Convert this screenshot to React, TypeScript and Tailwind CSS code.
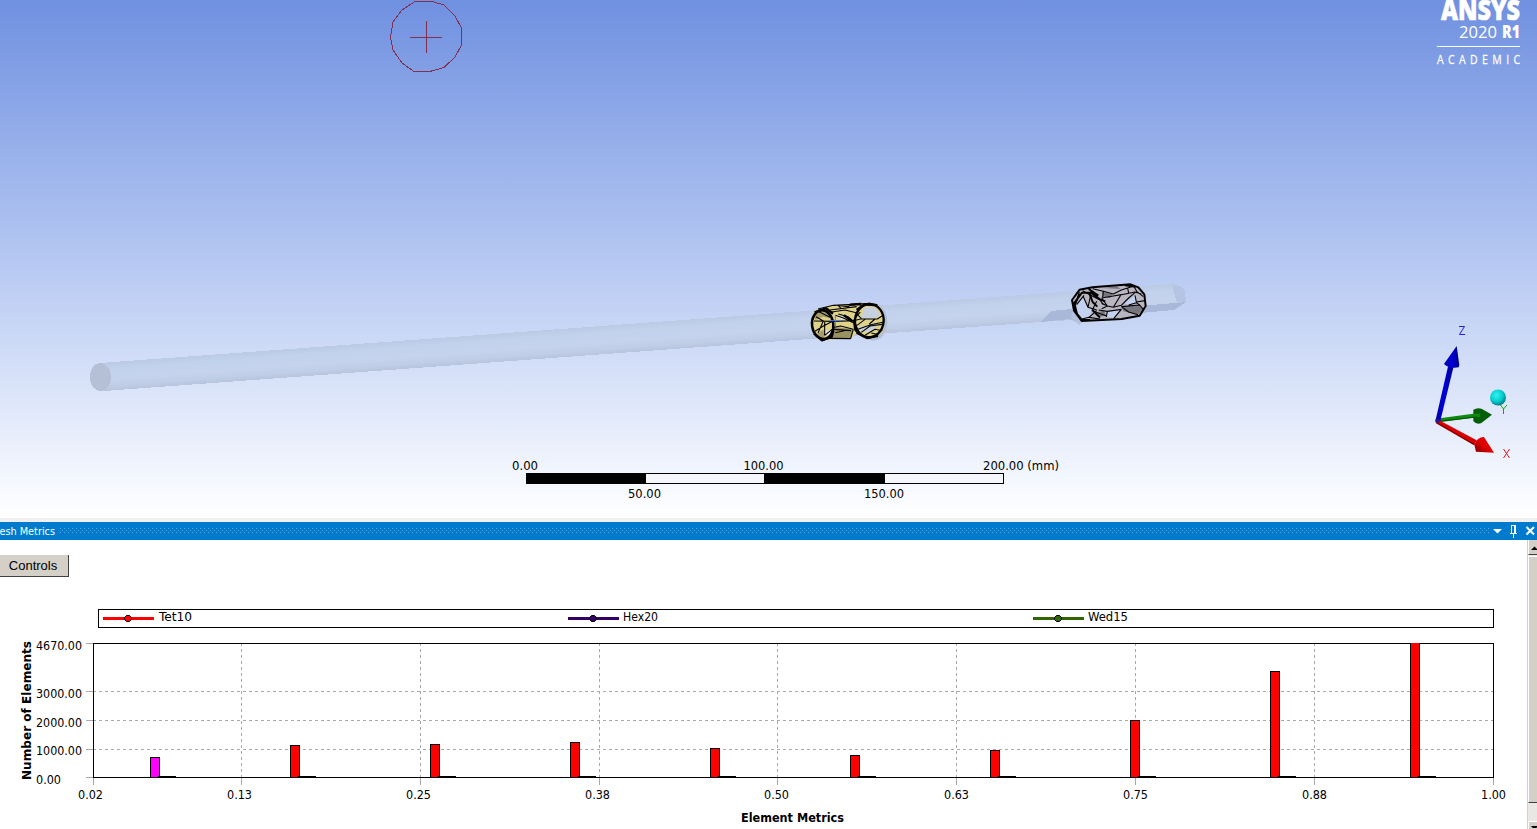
import React from 'react';

const tahoma = "'DejaVu Sans Condensed','DejaVu Sans',sans-serif";

type LabelProps = {
  x: number;
  y: number;
  w: number;
  children: string;
  size?: number;
  fill?: string;
  weight?: number;
  family?: string;
};

function Label({ x, y, w, children, size = 12, fill = '#000', weight = 400, family = tahoma }: LabelProps) {
  return (
    <text x={x} y={y} fontSize={size} fill={fill} fontWeight={weight} fontFamily={family} textLength={w} lengthAdjust="spacingAndGlyphs">
      {children}
    </text>
  );
}

function Pipe() {
  return (
    <g shapeRendering="crispEdges">
      <defs>
        <linearGradient id="pipe" x1="600" y1="326" x2="602.06" y2="354" gradientUnits="userSpaceOnUse">
          <stop offset="0" stopColor="#bac9e4" />
          <stop offset="0.25" stopColor="#c2d1ec" />
          <stop offset="0.6" stopColor="#c6d3ed" />
          <stop offset="0.85" stopColor="#c0cde6" />
          <stop offset="1" stopColor="#b8c5dd" />
        </linearGradient>
      </defs>
      <path d="M100 363 L1172 284 Q1182 285 1185 292 L1186 303 L1174 310 L1082 317 L1078 323 L1072 320 L1040 322 L104 391 Q90 391 90 377 Q90 364 100 363Z" fill="url(#pipe)" />
      <path d="M1040 322 L1051 311 L1072 309 L1078 323 L1070 319Z" fill="#a9b8d8" />
      <path d="M1140 306 L1186 302 L1174 310 L1140 313Z" fill="#a9b8d8" />
      <path d="M1172 284 Q1182 285 1185 291 L1186 302 L1177 303 L1174 292Z" fill="#b4c4e2" />
      <ellipse cx="100.500" cy="377" rx="10.500" ry="14" fill="#b5c0d7" />
    </g>
  );
}

function BrassMesh() {
  return (
    <g transform="translate(790 290) scale(0.33333)" strokeLinejoin="bevel">
      <ellipse cx="250" cy="96" rx="42" ry="56" fill="#b4c0d6" />
      <path d="M84 56 L130 46 L205 42 L245 40 L272 52 L283 88 L279 126 L254 142 L196 132 L182 145 L96 151 L72 134 L64 100 L70 66Z" fill="#dfd28a" />
      <path d="M134 111 L190 118 L182 146 L118 147Z" fill="#99915e" />
      <path d="M74 76 L92 63 L116 70 L120 84 L98 80 L76 90Z M82 132 L100 118 L104 142 L98 148Z" fill="#a79d68" />
      <path d="M221 55 Q237 46 258 54 L270 74 L255 86 L215 86Z M204 110 L226 108 L266 101 L244 124 L214 126Z" fill="#c6d0de" />
      <path d="M104 122 L122 120 L124 134 L106 136Z M136 76 L160 80 L183 93 L150 88Z" fill="#dce2ec" />
      <g fill="none" stroke="#000" strokeWidth="3.300">
        <path d="M84 57 L130 46 L205 42 L242 40 M96 151 L120 145 L182 146 M190 118 L182 146 M120 60 L200 50 M125 66 L165 60 L205 70 M145 72 L174 80 L192 95 M136 76 L160 84 L190 98 M132 112 L152 108 L190 118 M132 118 L183 122 M136 128 L172 120 M72 93 L133 94 L190 92 M78 80 L100 93 L84 129 M75 124 L100 108 L128 94 M104 96 L104 136 L129 116 M84 64 L120 82 M154 56 L144 46 L175 50 L182 44 M211 66 L192 89 L205 126" />
        <path d="M190 92 L212 87 L262 87 L276 78 M201 106 L225 88 M204 118 L242 104 L282 96 M214 127 L240 108 L276 103 M225 136 L255 118 L277 122 M201 72 L214 86 M238 102 L255 87 M244 129 L266 134" />
      </g>
      <ellipse cx="98" cy="104" rx="32" ry="43" fill="none" stroke="#000" strokeWidth="7.500" transform="rotate(-7 98 104)" />
      <ellipse cx="238" cy="92" rx="43" ry="50" fill="none" stroke="#000" strokeWidth="7" transform="rotate(5 238 92)" />
      <path d="M74 67 L108 55 L129 71 M72 130 L96 151 L125 140 L130 122 M200 60 L224 43 L262 46 M200 128 L231 144 L264 137 M192 90 L196 119 L206 130 M180 44 L214 42 M162 76 L184 92" fill="none" stroke="#000" strokeWidth="7.500" />
      <path d="M120 92 H153 M136 77 V108" stroke="#4f7fe6" strokeWidth="3" />
    </g>
  );
}

function SteelMesh() {
  return (
    <g transform="translate(1020 270) scale(0.33333)" strokeLinejoin="bevel">
      <path d="M160 118 L152 142 L178 165 L190 151Z" fill="#b3c2de" />
      <path d="M178 60 L220 51 L332 43 L355 50 L374 71 L377 109 L359 137 L280 148 L184 153 L160 119 L156 90Z" fill="#b9b6c2" />
      <path d="M170 104 L190 80 L204 112 L216 122 L207 142 L186 147 L169 126Z M313 98 L345 76 L349 96 L326 105Z M262 124 L298 121 L281 145 L259 140Z" fill="#c2d2f0" />
      <path d="M304 110 L359 105 L368 118 L354 134 L310 124Z M228 127 L252 122 L258 137 L233 141Z M246 65 L277 73 L270 84 L250 80Z M249 54 L290 49 L302 57Z" fill="#77757d" />
      <g fill="none" stroke="#000" strokeWidth="3.300">
        <path d="M218 56 L250 64 L280 72 L304 60 L323 54 L341 48 M245 84 L280 78 L304 74 L345 66 L364 72 M245 84 L262 108 L280 112 L302 76 M250 64 L248 82 M323 54 L326 70 M341 48 L350 64 L370 80 M345 68 L326 84 L304 106 L280 112 M345 76 L349 96 L375 92 M326 105 L349 98 L359 105 L370 118 M304 110 L359 105 M304 110 L326 126 L354 134 M262 124 L304 118 L281 146 M236 120 L262 124 L259 141 M228 127 L258 137 M245 100 L262 108 L245 116" />
        <path d="M188 62 L212 76 L240 90 L250 104 M190 80 L204 112 L230 120 M212 76 L204 112 M170 104 L192 76 M164 122 L186 147 L207 142 L230 122 M178 66 L166 104 M230 94 L216 122 M207 142 L240 147" />
      </g>
      <path d="M178 59 L217 52 L332 43 L355 52 L373 73 L377 108 L359 137 L305 147 L185 153 L162 122 L156 90 L179 59 M162 100 L186 68 L212 68 L240 88 M171 132 L164 104 L179 72 M181 149 L210 150 M206 57 L235 77 M208 70 L218 96 L232 110 M217 120 L240 143 M315 46 L347 50 M240 88 L256 94" fill="none" stroke="#000" strokeWidth="6" />
    </g>
  );
}

function Triad() {
  return (
    <g>
      <defs>
        <radialGradient id="ball" cx="0.4" cy="0.35" r="0.65">
          <stop offset="0" stopColor="#38f2ee" />
          <stop offset="0.6" stopColor="#00cfd2" />
          <stop offset="1" stopColor="#007f88" />
        </radialGradient>
        <linearGradient id="zArrow"><stop stopColor="#0000a0" /><stop offset="0.5" stopColor="#0000dc" /><stop offset="1" stopColor="#000080" /></linearGradient>
        <linearGradient id="xArrow" x1="0" y1="1" x2="1" y2="0"><stop stopColor="#7d0000" /><stop offset="0.5" stopColor="#e60000" /><stop offset="1" stopColor="#c00000" /></linearGradient>
      </defs>
      <g transform="translate(1410 315) scale(0.33333)">
        <path d="M190 284 Q203 276 216 282 L246 299 L213 325 Q198 329 190 318Z" fill="#075e09" />
        <path d="M78 311 L190 296 L210 296 L211 305 L87 322Z" fill="#0b8a0d" />
        <path d="M78 320 L200 306" stroke="#045006" strokeWidth="3" />
        <path d="M76 319 L115 150 L131 154 L90 322Z" fill="url(#zArrow)" />
        <path d="M140 93 L102 147 Q115 161 146 157 L148 150Z" fill="url(#zArrow)" />
        <path d="M82 313 L200 376 L193 389 L78 323Z" fill="#d80000" />
        <path d="M79 323 L193 389" stroke="#890000" strokeWidth="4" />
        <path d="M222 366 Q201 366 193 389 L198 410 L252 413Z" fill="url(#xArrow)" />
        <path d="M76 313 H88 V323 H77Z" fill="#26188f" />
      </g>
      <g fill="none" strokeWidth="1">
        <path d="M1459 326.500 H1464.500 L1459.500 334.500 H1465" stroke="#2020e0" />
        <path d="M1500.500 405 L1503.500 409 V414 M1503.500 409 L1507 405" stroke="#12a412" />
        <path d="M1503.500 449 L1509.500 458 M1509.500 449 L1503.500 458" stroke="#e01818" />
      </g>
      <circle cx="1498" cy="397.500" r="8" fill="url(#ball)" />
    </g>
  );
}

function Ruler() {
  return (
    <g>
      <g shapeRendering="crispEdges">
        <rect x="526" y="473" width="478" height="11" fill="#000" />
        <rect x="646" y="474" width="118" height="9" fill="#f5f7fd" />
        <rect x="885" y="474" width="118" height="9" fill="#f5f7fd" />
      </g>
      <Label x={512} y={470} w={26}>0.00</Label>
      <Label x={743.5} y={470} w={40}>100.00</Label>
      <Label x={983} y={470} w={76}>200.00 (mm)</Label>
      <Label x={628} y={498} w={33}>50.00</Label>
      <Label x={864} y={498} w={40}>150.00</Label>
    </g>
  );
}

function Brand() {
  const f = "'Open Sans','Noto Sans',sans-serif";
  return (
    <g>
      <g stroke="#fff" strokeWidth="0.6">
        <Label x={1441} y={20} w={79} size={28} weight={800} fill="#fff" family={f}>ANSYS</Label>
      </g>
      <text y="38" fontSize="17" fill="#fff" fontFamily={f}>
        <tspan x="1459" textLength="38" lengthAdjust="spacingAndGlyphs">2020</tspan>
        <tspan x="1502" fontWeight="800" textLength="18" lengthAdjust="spacingAndGlyphs">R1</tspan>
      </text>
      <rect x="1437" y="46" width="83" height="1" fill="#fff" />
      <text x="1437" y="64" fontSize="12.500" fill="#fff" stroke="#fff" strokeWidth="0.25" fontFamily={f} transform="translate(1437 0) scale(0.84 1) translate(-1437 0)" textLength="99" lengthAdjust="spacing">ACADEMIC</text>
    </g>
  );
}

function Viewport() {
  return (
    <section className="h-[518px] shrink-0 bg-linear-to-b from-[#7090e0] to-white">
      <svg className="block" width="1537" height="518" viewBox="0 0 1537 518">
        <g fill="none" stroke="#803050" strokeWidth="1" shapeRendering="crispEdges">
          <path d="M415 1.500 H432 L444 5 L455 16 L461.500 28 V45 L455 57 L444 67.500 L428 72 L414 71.500 L402 63 L393 50 L390.500 37 L393 22 L402 10Z" />
          <path d="M410 37.500 H442 M426.500 21 V53" />
        </g>
        <Pipe />
        <BrassMesh />
        <SteelMesh />
        <Triad />
        <Ruler />
        <Brand />
      </svg>
    </section>
  );
}

function TitleBar() {
  return (
    <header className="flex h-[18px] shrink-0 items-center overflow-hidden bg-[#007acc] text-white">
      <svg className="block" width="1537" height="18">
        <defs>
          <pattern id="grip" width="4" height="4" patternUnits="userSpaceOnUse" x="60" y="6">
            <rect width="1" height="1" fill="#59a8de" />
            <rect x="2" y="2" width="1" height="1" fill="#59a8de" />
          </pattern>
        </defs>
        <Label x={-9} y={13} w={64} size={11} fill="#fff">Mesh Metrics</Label>
        <rect x="60" y="6" width="1430" height="5" fill="url(#grip)" />
        <path d="M1493 7 H1502 L1497.500 11.500Z" fill="#fff" />
        <path d="M1511.500 11 V3.500 H1515.500 V11 M1514.500 4 V11 M1510 11.500 H1517 M1513.500 12 V16" stroke="#fff" fill="none" shapeRendering="crispEdges" />
        <path d="M1526.500 5 L1534 12.500 M1534 5 L1526.500 12.500" stroke="#fff" strokeWidth="2" />
      </svg>
    </header>
  );
}

const bars = [
  { x: 150, top: 757 },
  { x: 290, top: 745 },
  { x: 430, top: 744 },
  { x: 570, top: 742 },
  { x: 710, top: 748 },
  { x: 850, top: 755 },
  { x: 990, top: 750 },
  { x: 1130, top: 720 },
  { x: 1270, top: 671 },
  { x: 1410, top: 643 },
];

const xTicks = [
  { x: 93, lx: 78, t: '0.02' },
  { x: 241, lx: 227, t: '0.13' },
  { x: 420, lx: 406, t: '0.25' },
  { x: 599, lx: 585, t: '0.38' },
  { x: 777, lx: 764, t: '0.50' },
  { x: 956, lx: 944, t: '0.63' },
  { x: 1135, lx: 1123, t: '0.75' },
  { x: 1314, lx: 1302, t: '0.88' },
  { x: 1493, lx: 1481, t: '1.00' },
];

const yTicks = [
  { y: 643, ly: 650, t: '4670.00', w: 46 },
  { y: 691, ly: 698, t: '3000.00', w: 46 },
  { y: 720, ly: 727, t: '2000.00', w: 46 },
  { y: 749, ly: 755, t: '1000.00', w: 46 },
  { y: 777, ly: 784, t: '0.00', w: 25 },
];

const series = [
  { x: 102, name: 'Tet10', color: '#ff0000', w: 33 },
  { x: 567, name: 'Hex20', color: '#330066', w: 35 },
  { x: 1032, name: 'Wed15', color: '#336600', w: 40 },
];

function Chart() {
  return (
    <svg className="block" width="1527" height="252" viewBox="0 577 1527 252">
      <g shapeRendering="crispEdges">
        <rect x="98.500" y="609.500" width="1395" height="18" fill="#fff" stroke="#000" />
        {series.map((s) => (
          <g key={s.name}>
            <rect x={s.x + 1} y="617" width="51" height="3" fill={s.color} />
            <path d={`M${s.x + 24.5} 615.500h3l2 2v2l-2 2h-3l-2 -2v-2z`} fill={s.color} stroke="#000" shapeRendering="auto" />
          </g>
        ))}
        {xTicks.map((t) => (
          <g key={t.t} stroke="#a9a9a9">
            <path d={`M${t.x + 0.5} 778V785`} />
            <path d={`M${t.x + 0.5} 643V778`} strokeDasharray="3 3" />
          </g>
        ))}
        {yTicks.map((t) => (
          <g key={t.t} stroke="#a9a9a9">
            <path d={`M86 ${t.y + 0.5}H93`} />
            <path d={`M93 ${t.y + 0.5}H1493`} strokeDasharray="3 3" />
          </g>
        ))}
        <rect x="93.500" y="643.500" width="1400" height="134" fill="none" stroke="#000" />
        {bars.map((b, i) => (
          <g key={b.x}>
            <rect x={b.x} y={b.top} width="10" height={778 - b.top} fill="#000" />
            <rect x={b.x + 1} y={i === 9 ? b.top : b.top + 1} width="8" height={i === 9 ? 134 : 776 - b.top} fill={i === 0 ? '#ff00ff' : '#ff0000'} />
            <rect x={b.x + 8} y="776" width="18" height="2" fill="#000" />
          </g>
        ))}
      </g>
      {series.map((s) => (
        <Label key={s.name} x={s.x + (s.name === 'Tet10' ? 57 : 56)} y={621} w={s.w}>{s.name}</Label>
      ))}
      {xTicks.map((t) => (
        <Label key={t.t} x={t.lx} y={799} w={25}>{t.t}</Label>
      ))}
      {yTicks.map((t) => (
        <Label key={t.t} x={36} y={t.ly} w={t.w}>{t.t}</Label>
      ))}
      <g transform="translate(31 780) rotate(-90)">
        <Label x={0} y={0} w={139} weight={700} size={11.5} family="'DejaVu Sans',sans-serif">Number of Elements</Label>
      </g>
      <Label x={741} y={822} w={103} weight={700} size={11.5} family="'DejaVu Sans',sans-serif">Element Metrics</Label>
    </svg>
  );
}

function ScrollBar() {
  return (
    <aside className="flex w-[10px] shrink-0 flex-col overflow-hidden border-l border-[#d4d0c8] bg-[#ebe9e5]">
      <div className="flex h-[15px] shrink-0 items-center border-b border-l border-b-[#404040] border-l-white bg-[#d4d0c8]">
        <svg width="8" height="12"><path d="M2 9 L5.500 5.500 L9 9Z" fill="#000" /></svg>
      </div>
      <div className="mt-px h-[247px] shrink-0 border-t border-b border-l border-t-white border-b-[#404040] border-l-white bg-[#d4d0c8]" />
      <div className="h-[18px] shrink-0 bg-[#eae8e4]" />
      <div className="grow border-t border-l border-white bg-[#d4d0c8]">
        <svg width="8" height="6"><path d="M2 4 H9 L5.500 8Z" fill="#000" /></svg>
      </div>
    </aside>
  );
}

export default function App() {
  return (
    <main className="flex h-[829px] w-[1537px] flex-col overflow-hidden bg-white">
      <Viewport />
      <div className="h-1 shrink-0 bg-[#f0f0f0]" />
      <TitleBar />
      <div className="flex h-[289px] shrink-0">
        <div className="flex w-[1527px] shrink-0 flex-col">
          <div className="flex h-[37px] shrink-0 items-end">
            <button className="h-[22px] w-[69px] border-r border-b border-[#404040] bg-[#d4d0c8] pr-0.5 text-center font-['Liberation_Sans',sans-serif] text-[13px] leading-[20px] text-black">
              Controls
            </button>
          </div>
          <Chart />
        </div>
        <ScrollBar />
      </div>
    </main>
  );
}
